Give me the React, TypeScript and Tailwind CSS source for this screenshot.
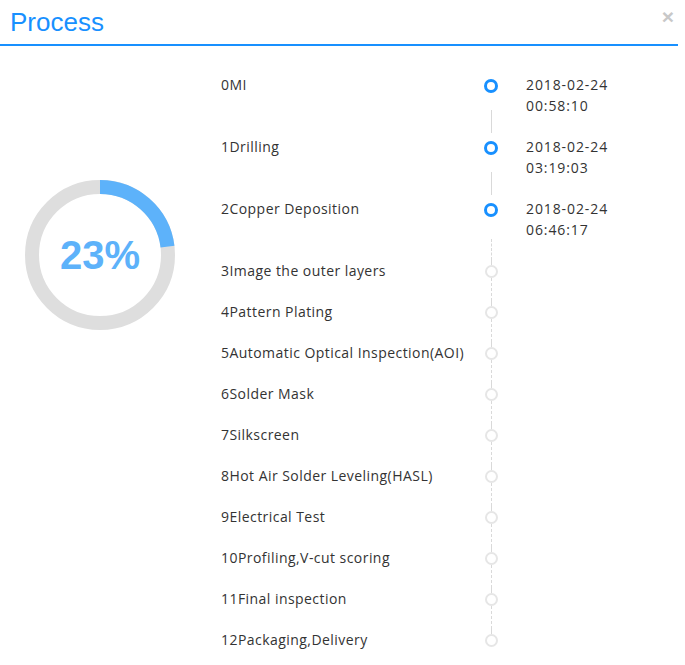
import React from 'react';

const steps = [
  { name: '0MI', date: '2018-02-24', time: '00:58:10' },
  { name: '1Drilling', date: '2018-02-24', time: '03:19:03' },
  { name: '2Copper Deposition', date: '2018-02-24', time: '06:46:17' },
  { name: '3Image the outer layers' },
  { name: '4Pattern Plating' },
  { name: '5Automatic Optical Inspection(AOI)' },
  { name: '6Solder Mask' },
  { name: '7Silkscreen' },
  { name: '8Hot Air Solder Leveling(HASL)' },
  { name: '9Electrical Test' },
  { name: '10Profiling,V-cut scoring' },
  { name: '11Final inspection' },
  { name: '12Packaging,Delivery' },
];

const percent = 23;

function Donut() {
  const r = 68;
  const c = 2 * Math.PI * r;
  return (
    <div className="relative w-[150px] h-[150px]">
      <svg width="150" height="150" viewBox="0 0 150 150">
        <circle cx="75" cy="75" r={r} fill="none" stroke="#dedede" strokeWidth="14" />
        <circle
          cx="75"
          cy="75"
          r={r}
          fill="none"
          stroke="#5db2fa"
          strokeWidth="14"
          strokeDasharray={`${(c * percent) / 100} ${c}`}
          transform="rotate(-90 75 75)"
        />
      </svg>
      <div className="absolute inset-0 flex items-center justify-center text-[40px] font-bold text-[#5db2fa] font-['Liberation_Sans',sans-serif]">
        {percent}%
      </div>
    </div>
  );
}

export default function App() {
  const doneCount = steps.filter((s) => s.date).length;

  return (
    <div className="w-[685px] h-[665px] bg-white overflow-hidden font-['Open_Sans',sans-serif] text-[#333]">
      {/* Header */}
      <div className="flex items-center justify-between h-[46px] border-b-2 border-[#1890ff] w-[678px] pl-[10px] pr-[4px]">
        <h1 className="text-[26px] text-[#1890ff] font-['Liberation_Sans',sans-serif] leading-none">
          Process
        </h1>
        <span className="text-[#c8c8c8] text-[21px] font-bold leading-none font-['Liberation_Sans',sans-serif] -mt-[12px]">
          ×
        </span>
      </div>

      <div className="flex pt-[28px]">
        {/* Progress */}
        <div className="w-[221px] shrink-0 pl-[25px] pt-[106px]">
          <Donut />
        </div>

        {/* Timeline */}
        <div className="flex flex-col">
          {steps.map((step, i) => {
            const done = !!step.date;
            const last = i === steps.length - 1;
            return (
              <div key={step.name} className={`flex text-[14px] leading-[21px] ${done ? 'h-[62px]' : 'h-[41px]'}`}>
                <div className="w-[263px] tracking-[0.45px]">{step.name}</div>
                <div className="w-[14px] flex flex-col items-center">
                  {done ? (
                    <>
                      <div className="w-[14px] h-[14px] mt-[5px] rounded-full border-[3px] border-[#1890ff] bg-white" />
                      {i < doneCount - 1 ? (
                        <div className="mt-[17px] h-[23px] border-l border-[#d9d9d9]" />
                      ) : (
                        <div className="mt-[22px] flex-1 border-l border-dashed border-[#d9d9d9]" />
                      )}
                    </>
                  ) : (
                    <>
                      <div className="h-[5px] border-l border-dashed border-[#d9d9d9]" />
                      <div className="w-[13px] h-[13px] rounded-full border-2 border-[#e6e6e6] bg-white" />
                      {!last && <div className="flex-1 border-l border-dashed border-[#d9d9d9]" />}
                    </>
                  )}
                </div>
                {done && (
                  <div className="pl-[28px] tracking-[0.9px]">
                    <div>{step.date}</div>
                    <div>{step.time}</div>
                  </div>
                )}
              </div>
            );
          })}
        </div>
      </div>
    </div>
  );
}
